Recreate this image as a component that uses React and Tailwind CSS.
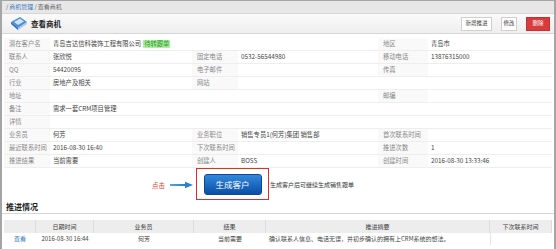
import React from 'react';

const rows = [
  [
    { label: '潜在客户名', value: 'company', span: 3 },
    { label: '地区', value: '青岛市' },
  ],
  [
    { label: '联系人', value: '张欣悦' },
    { label: '固定电话', value: '0532-56544980' },
    { label: '移动电话', value: '13876315000' },
  ],
  [
    { label: 'QQ', value: '54420095' },
    { label: '电子邮件', value: '' },
    { label: '传真', value: '' },
  ],
  [
    { label: '行业', value: '房地产及相关' },
    { label: '网站', value: '', span: 3 },
  ],
  [
    { label: '地址', value: '', span: 3 },
    { label: '邮编', value: '' },
  ],
  [{ label: '备注', value: '需求一套CRM项目管理', span: 5 }],
  [{ label: '详情', value: '', span: 5 }],
  [
    { label: '业务员', value: '何芳' },
    { label: '业务职位', value: '销售专员1(何芳)集团 销售部' },
    { label: '首次联系时间', value: '' },
  ],
  [
    { label: '最近联系时间', value: '2016-08-30 16:40' },
    { label: '下次联系时间', value: '' },
    { label: '推进次数', value: '1' },
  ],
  [
    { label: '推进结果', value: '当前需要' },
    { label: '创建人', value: 'BOSS' },
    { label: '创建时间', value: '2016-08-30 13:33:46' },
  ],
];

const spanClass = { 1: 'col-span-1', 3: 'col-span-3', 5: 'col-span-5' };

const BookIcon = () => (
  <svg width="18" height="15" viewBox="0 0 18 15">
    <path d="M1 6 L10 1 L17 6 L8 12 Z" fill="#4a8fd8" />
    <path d="M1 6 L8 12 L8 14 L1 8 Z" fill="#2c6cb5" />
    <path d="M8 12 L17 6 L17 8 L8 14 Z" fill="#a9c9ea" />
    <path d="M4 6 L10 2.5 L14 5.5 L8 9 Z" fill="#cfe2f6" />
  </svg>
);

export default function App() {
  return (
    <div
      className="w-[556px] h-[249px] overflow-hidden bg-white border-x-2 border-t border-[#a5a5a5] text-[#444] flex flex-col"
      style={{ fontFamily: '"Noto Sans CJK SC", "Noto Sans", sans-serif' }}
    >
      {/* breadcrumb */}
      <div className="h-[12px] bg-[#e7e7e7] flex items-center px-[4px] text-[6px] text-[#666] leading-none">
        <span>/</span>
        <span className="text-[#3b7cc0] ml-[1px]">商机管理</span>
        <span className="ml-[1px]">/</span>
        <span className="ml-[1px]">查看商机</span>
      </div>

      {/* header */}
      <div className="h-[21px] flex items-center justify-between bg-gradient-to-b from-[#fafafa] to-[#eeeeee] border-y border-[#d6d6d6] pl-[8px] pr-[4px]">
        <div className="flex items-center gap-[3px]">
          <BookIcon />
          <span className="text-[7.5px] font-bold text-[#222]">查看商机</span>
        </div>
        <div className="flex items-center gap-[9px] text-[5.5px] leading-none">
          <div className="h-[14px] w-[31px] flex items-center justify-center bg-white border border-[#cfcfcf]">新增推进</div>
          <div className="h-[14px] w-[16px] flex items-center justify-center bg-white border border-[#cfcfcf]">修改</div>
          <div className="h-[14px] w-[24px] flex items-center justify-center bg-[#d93a3c] border border-[#c23032] text-white">删除</div>
        </div>
      </div>

      {/* info table */}
      <div className="mt-[4px] mx-[2px] grid grid-cols-[46px_142px_46px_140px_50px_1fr] text-[6.3px] leading-none">
        {rows.map((row, ri) =>
          row.map((c, ci) => (
            <React.Fragment key={ri + '-' + ci}>
              <div className="h-[13px] flex items-center pl-[5px] bg-[#f9f9f9] text-[#888] border-b border-[#eeeeee]">
                {c.label}
              </div>
              <div
                className={`h-[13px] flex items-center pl-[3px] border-b border-[#eeeeee] ${spanClass[c.span || 1]}`}
              >
                {c.value === 'company' ? (
                  <>
                    <span>青岛吉达信科装饰工程有限公司</span>
                    <span className="ml-[2px] px-[1px] py-[1px] bg-[#aef0a2] text-[#2f9a2a]">待转跟单</span>
                  </>
                ) : (
                  c.value
                )}
              </div>
            </React.Fragment>
          ))
        )}
      </div>

      {/* action */}
      <div className="h-[32px] flex items-center pl-[150px]">
        <span className="text-[6.5px] text-[#e0382f] mt-[4px]">点击</span>
        <svg width="24" height="8" viewBox="0 0 24 8" className="ml-[5px] mt-[2px]">
          <path d="M0 3.2 L15 3 L15 0.8 L23 4 L15 7.2 L15 5 L0 4.8 Z" fill="#2f7fd0" />
        </svg>
        <div className="ml-[2px] w-[73px] h-[32px] border-[1.5px] border-[#d9302b] flex items-center justify-center">
          <div className="w-[58px] h-[21px] rounded-[3px] bg-gradient-to-b from-[#3488dc] to-[#0a4ea8] border border-[#0b4897] flex items-center justify-center text-white text-[8.5px] leading-none">
            生成客户
          </div>
        </div>
        <span className="ml-[1px] text-[6px] text-[#333]">生成客户后可继续生成销售跟单</span>
      </div>

      {/* progress title */}
      <div className="h-[14px] flex items-center pl-[4px] border-b border-[#d6d6d6] text-[8px] font-bold text-[#222] leading-none">
        推进情况
      </div>

      {/* progress table */}
      <div className="mt-[6px] mx-[2px] grid grid-cols-[32px_58px_100px_72px_224px_1fr] text-[6px] leading-none text-center">
        {['', '日期时间', '业务员', '结果', '推进摘要', '下次联系时间'].map((h, i) => (
          <div key={h + i} className="h-[13px] flex items-center justify-center bg-[#ededed] border-r border-[#dcdcdc] last:border-r-0">
            {h}
          </div>
        ))}
        <div className="h-[12px] flex items-center justify-center text-[#3b7cc0]">查看</div>
        <div className="h-[12px] flex items-center justify-center">2016-08-30 16:44</div>
        <div className="h-[12px] flex items-center justify-center">何芳</div>
        <div className="h-[12px] flex items-center justify-center">当前需要</div>
        <div className="h-[12px] flex items-center justify-start pl-[3px] whitespace-nowrap">确认联系人信息、电话无误，并初步确认的拥有上CRM系统的想法。</div>
        <div className="h-[12px] border-l border-[#e6e6e6]"></div>
      </div>
    </div>
  );
}
